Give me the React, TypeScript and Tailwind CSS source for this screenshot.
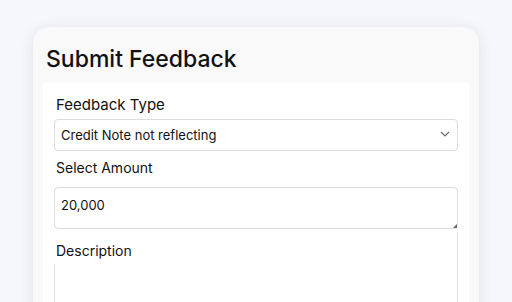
import React from 'react';

const font = { fontFamily: 'Inter, "Open Sans", "Liberation Sans", sans-serif' };

export default function App() {
  return (
    <div
      className="h-[302px] overflow-hidden bg-[#f6f7fb] pt-[27px] pl-[33px] text-[#111]"
      style={font}
    >
      <div className="w-[446px] h-[320px] rounded-t-[16px] bg-[#f9f9f9] shadow-[0_2px_14px_rgba(30,40,80,0.10)] px-[10px]">
        <h2 className="pl-[3px] pt-[16px] pb-[8px] text-[23px] font-medium leading-[32px]">
          Submit Feedback
        </h2>

        <div className="bg-white px-[11px] pt-[11px] h-[240px]">
          <label className="block pl-[2px] text-[15px] leading-[22px]">Feedback Type</label>
          <div className="relative mt-[3px]">
            <select
              defaultValue="credit"
              className="block w-full h-[32px] appearance-none rounded-[4px] border border-[#dcdcdc] bg-white pl-[6px] pr-6 text-[13px] leading-[30px] text-[#111] outline-none"
            >
              <option value="credit">Credit Note not reflecting</option>
            </select>
            <svg
              className="pointer-events-none absolute right-[8px] top-[12px]"
              width="10"
              height="6"
              viewBox="0 0 10 6"
              fill="none"
            >
              <path d="M1 1l4 4 4-4" stroke="#666" strokeWidth="1.1" />
            </svg>
          </div>

          <label className="block mt-[7px] pl-[2px] text-[14px] leading-[20px]">Select Amount</label>
          <div className="relative mt-[9px]">
            <textarea
              rows={1}
              defaultValue="20,000"
              className="block w-full h-[42px] resize-none rounded-[4px] border border-[#dcdcdc] px-[6px] pt-[8px] text-[13px] leading-[18px] text-[#111] outline-none"
            />
            <svg className="pointer-events-none absolute right-[1px] bottom-[1px]" width="4" height="4" viewBox="0 0 4 4">
              <path d="M4 0v4H0z" fill="#666" />
            </svg>
          </div>

          <div className="mt-[3px] border-r border-[#e2e2e2] h-[100px]">
            <label className="block pt-[9px] pl-[2px] text-[14px] leading-[20px]">Description</label>
            <div className="mt-[3px] h-[60px] border-l border-[#e2e2e2]" />
          </div>
        </div>
      </div>
    </div>
  );
}
